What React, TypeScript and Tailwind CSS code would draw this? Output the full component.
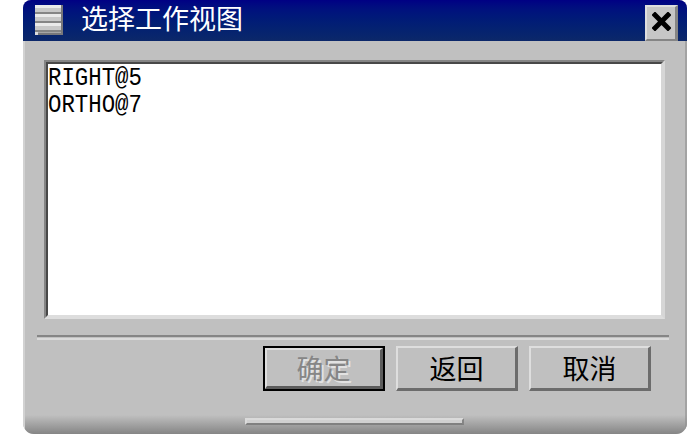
import React from "react";

const cjk = "font-['Noto_Sans_CJK_SC',sans-serif]";
const items = ["RIGHT@5", "ORTHO@7"];

function PushButton({ label, disabled = false }: { label: string; disabled?: boolean }) {
  return (
    <button
      disabled={disabled}
      className={`flex h-[45px] w-[122px] items-center justify-center ${disabled ? "border-2 border-black" : ""}`}
    >
      <span
        className={`flex h-full w-full items-center justify-center border-t-2 border-r-[3px] border-b-[3px] border-l-2 border-t-[#dedede] border-l-[#dedede] bg-[#c0c0c0] ${
          disabled
            ? "border-r-[#5c5c5c] border-b-[#5c5c5c] text-[#868686]"
            : "border-r-[#6c6c6c] border-b-[#6c6c6c] text-black"
        }`}
      >
        <span
          className={`-mt-px text-[27px] leading-[36px] ${cjk} ${
            disabled ? "[text-shadow:2px_2px_0_#e2e2e2]" : ""
          }`}
        >
          {label}
        </span>
      </span>
    </button>
  );
}

function MenuIcon() {
  return (
    <svg width="28" height="30" viewBox="0 0 28 30" shapeRendering="crispEdges">
      <rect width="28" height="30" fill="#77777a" />
      <rect width="26" height="28" fill="#a6a6a6" />
      {[0, 9, 18].map((y) => (
        <g key={y}>
          <rect y={y} width="26" height="3" fill="#eaeaea" />
          <rect y={y + 3} width="26" height="4" fill="#c8c8c8" />
          <rect y={y + 7} width="26" height="2" fill="#858585" />
        </g>
      ))}
      <rect y="27" width="3" height="3" fill="#dddddd" />
    </svg>
  );
}

export default function App() {
  return (
    <main className="h-[447px] w-[696px] overflow-hidden bg-white pl-[23px]">
      <section className="flex h-[434px] w-[664px] flex-col overflow-hidden rounded-t-[8px] rounded-b-[11px] bg-[#c0c0c0]">
        <header className="flex h-[41px] shrink-0 items-start bg-linear-to-b from-[#000084] to-[#0c2869] pl-[12px]">
          <div className="pt-[5px]">
            <MenuIcon />
          </div>
          <h1 className={`ml-[18px] text-[27px] leading-[36px] font-normal text-white ${cjk}`}>选择工作视图</h1>
          <button className="mt-[5px] mr-[9px] ml-auto flex h-[36px] w-[33px] items-center justify-center border-t-2 border-r-[3px] border-b-2 border-l-2 border-t-[#dedede] border-r-[#858585] border-b-[#858585] border-l-[#dedede] bg-[#c6c6c6]">
            <svg width="19" height="19" viewBox="0 0 19 19" className="-mt-[3px]">
              <path d="M3 3L16 16M16 3L3 16" stroke="black" strokeWidth="5" strokeLinecap="square" />
            </svg>
          </button>
        </header>
        <div className="flex flex-1 flex-col border-r-2 border-l-2 border-r-[#8f8f8f]/60 border-l-[#d2d2d2] [background-image:linear-gradient(to_bottom,#c0c0c0_0,#c0c0c0_374px,#858585_393px)]">
          <div className="mt-[19px] ml-[19px] h-[259px] w-[621px] border-2 border-t-[#858585] border-r-[#d6d6d6] border-b-[#dddddd] border-l-[#858585]">
            <ul className="h-full border-2 border-t-[#484848] border-r-[#d6d6d6] border-b-[#dddddd] border-l-[#484848] bg-white pt-[1px]">
              {items.map((item) => (
                <li key={item} className="h-[27px]">
                  <span className="block w-max origin-left scale-x-[0.86] font-['Liberation_Mono',monospace] text-[26px] leading-[27px] text-black">
                    {item}
                  </span>
                </li>
              ))}
            </ul>
          </div>
          <div className="mt-[16px] ml-[12px] h-[5px] w-[632px] border-t-2 border-b-2 border-t-[#858585] border-b-[#dadada]" />
          <div className="mt-[6px] ml-[238px] flex gap-[11px]">
            <PushButton label="确定" disabled />
            <PushButton label="返回" />
            <PushButton label="取消" />
          </div>
          <div className="mt-[27px] ml-[220px] h-[7px] w-[219px] border-2 border-t-[#dadada] border-r-[#858585] border-b-[#808080] border-l-[#dadada] bg-[#d0d0d0]" />
        </div>
      </section>
    </main>
  );
}
